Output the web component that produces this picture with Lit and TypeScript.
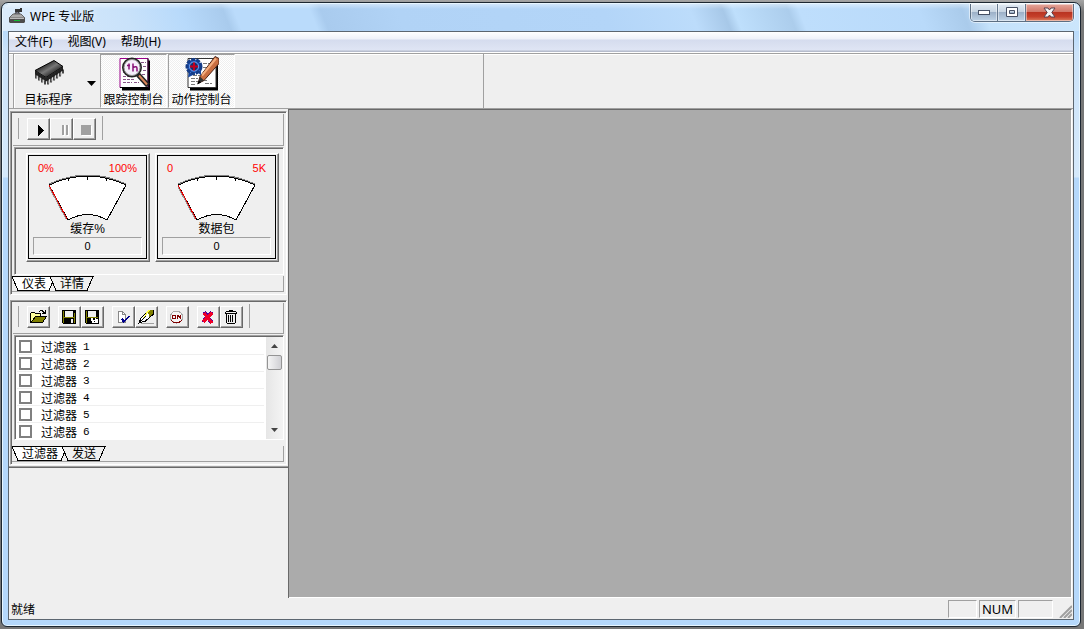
import { LitElement, html, svg, css } from "lit";
import { customElement, property, state } from "lit/decorators.js";

const icons: Record<string, unknown> = {
  play: svg`<path d="M10 6h1v1h1v1h1v1h1v1h1v1h1v1h-1v1h-1v1h-1v1h-1v1h-1v1h-1z" fill="#000"/>`,
  pause: svg`<path d="M12 6h2v11h-2zM16 6h2v11h-2z" fill="#fff"/><path d="M11 6h2v10h-2zM15 6h2v10h-2z" fill="#a0a0a0"/>`,
  stop: svg`<path d="M8 7h10v10h-10z" fill="#fff"/><path d="M7 6h10v10H7z" fill="#a0a0a0"/>`,
  open: svg`<path d="M3 6h4v1h6v3h-6l-3 5h-1z" fill="#ffff9c"/><path d="M2.500 15V6.500l1-1h3l1 1h5v3" fill="none" stroke="#000"/><path d="M11 4h1v-1h3v1h1v1h1V3h1v4h-4V6h1V5h-1V4h-2v1h-1z" fill="#000"/><path d="M7.500 9.500h11l-4 6H3z" fill="#808000" stroke="#000"/>`,
  save: svg`<path d="M3 3h14v14H4l-1-1z" fill="#000"/><path d="M4 4h1v12h-1zM4 10h12v1h-12zM15 6h1v10h-1z" fill="#808000"/><path d="M6 4h8v6H6zM12 12h2v4h-2z" fill="#efefef"/>`,
  saveas: svg`<path d="M3 3h14v14H4l-1-1z" fill="#000"/><path d="M4 4h1v12h-1zM4 10h12v1h-12z" fill="#808000"/><path d="M6 4h8v6H6z" fill="#efefef"/><path d="M9 11h2v2h2v-2h1v1h2v4h-6v-2h-1z" fill="#fff"/><path d="M12 14h1v1h-1z" fill="#000"/>`,
  check: svg`<path d="M5.500 4.500h4l3 3v8h-7z" fill="#fff" stroke="#888"/><path d="M9.500 4.500v3h3" fill="none" stroke="#888"/><path d="M9 11h1v1h1v1h1v-1h1v-1h1v-1h1v-1h2v1h-1v1h-1v1h-1v1h-1v1h-1v1h-1v1h-1v-1h-1v-2h-1z" fill="#00008b"/>`,
  pen: svg`<path d="M3 16l2-5 8-8h4.500v4l-8 7z" fill="#fff" stroke="#000"/><path d="M12 3h5v4l-4 3z" fill="#808000"/><path d="M12 3h2l-5 7-2 1z" fill="#ffff40"/><path d="M2 17l8-8" stroke="#000"/><path d="M5 16h13v1H5z" fill="#a0a0a0"/>`,
  on: svg`<circle cx="9.5" cy="10" r="6" fill="#f6f6f6" stroke="#aaa"/><path d="M4 13q5 6 11 0" fill="none" stroke="#800000"/><path d="M5 8h4v4H5zM6 9v2h2v-2zM10 8h1l2 2V8h1v4h-1l-2-2v2h-1z" fill="#800000" fill-rule="evenodd"/>`,
  del: svg`<path d="M6 5l8 11M14 5L5 15" stroke="#5000a0" stroke-width="4"/><path d="M6 6l8 10M14 6L5 15" stroke="#f00028" stroke-width="3"/>`,
  trash: svg`<path d="M8.500 4.500v-1h3v1M4.500 6.500v-1l1-1h9l1 1v1zM5.500 7v8l1 1.500h7l1-1.500V7M7.500 8v7M9.500 8v7M11.500 8v7" fill="none" stroke="#000"/>`,
};

@customElement("tool-button")
class ToolButton extends LitElement {
  @property() icon = "";
  @property() label = "";
  @property({ type: Boolean }) disabled = false;
  static styles = css`
    :host { display: block; }
    button { display: block; width: 23px; height: 22px; padding: 0; background: #efefef; border: 1px solid; border-color: #fff #696969 #696969 #fff; box-shadow: inset -1px -1px #a0a0a0; }
    svg { display: block; }
  `;
  render() {
    return html`<button aria-label=${this.label} title=${this.label} ?disabled=${this.disabled}>
      <svg width="21" height="20" viewBox="0 0 21 20" shape-rendering="crispEdges">${icons[this.icon]}</svg>
    </button>`;
  }
}

@customElement("meter-gauge")
class MeterGauge extends LitElement {
  @property() low = "";
  @property() high = "";
  @property() name = "";
  @property({ type: Number }) value = 0;
  static styles = css`
    :host { display: block; flex: none; width: 124px; box-sizing: border-box; border: 1px solid; border-color: #fff #696969 #696969 #fff; box-shadow: inset -1px -1px #a0a0a0; padding: 1px 2px 2px 1px; }
    .face { border: 1px solid #000; height: 99px; display: flex; flex-direction: column; padding: 0 4px 3px; }
    .scale { display: flex; justify-content: space-between; padding: 6px 5px 0; font: 11px/13px "Liberation Sans", sans-serif; color: #f00; }
    svg { display: block; align-self: center; flex: none; }
    .name { text-align: center; line-height: 16px; font-size: 12px; }
    output { display: block; border: 1px solid; border-color: #a0a0a0 #fff #fff #a0a0a0; line-height: 16px; font-size: 11px; text-align: center; }
  `;
  render() {
    return html`<div class="face">
      <div class="scale"><span>${this.low}</span><span>${this.high}</span></div>
      <svg width="79" height="46" viewBox="0 0 79 46" shape-rendering="crispEdges">
        <path d="M1 10Q40 -8 78 10L59 45Q40 34 20 45Z" fill="#fff" stroke="#000"/>
        <path d="M1 9Q40 -9 78 9" fill="none" stroke="#808080"/>
        <path d="M39.500 1v4M20 3l1 3M59 3l-1 3" stroke="#000"/>
        <path d="M1 12l17 32" stroke="#999"/><path d="M1 10l18 34" stroke="#e00000"/>
      </svg>
      <div class="name">${this.name}</div>
      <output aria-label=${this.name}>${this.value}</output>
    </div>`;
  }
}

@customElement("sheet-tabs")
class SheetTabs extends LitElement {
  @property({ attribute: false }) tabs: { label: string; width: number }[] = [];
  @state() active = 0;
  static styles = css`
    :host { display: flex; height: 16px; border-right: 1px solid #a0a0a0; border-bottom: 1px solid #a0a0a0; }
    button { position: relative; padding: 0; border: 0; background: none; font: inherit; color: #000; height: 16px; }
    button + button { margin-left: -6px; }
    svg { position: absolute; inset: 0; }
    span { position: relative; line-height: 16px; }
  `;
  render() {
    return this.tabs.map(({ label, width: w }, i) => html`
      <button role="tab" aria-selected=${this.active === i} style="width:${w}px" @click=${() => (this.active = i)}>
        <svg width=${w} height="16" shape-rendering="crispEdges">
          <path d="M0 .5H${w - 1}L${w - 7} 14.500H6Z" fill=${this.active === i ? "#fff" : "#efefef"} stroke="#000"/>
        </svg><span>${label}</span>
      </button>`);
  }
}

@customElement("app-root")
class AppRoot extends LitElement {
  static styles = css`
    :host { display: block; height: 100vh; box-sizing: border-box; background: linear-gradient(#a5a5a5, #777 12px, #777); padding: 2px 3px 2px 1px; font-family: "Noto Sans", "Noto Sans CJK SC", sans-serif; font-size: 12px; color: #000; overflow: hidden; }
    * { box-sizing: border-box; }
    button { font: inherit; color: inherit; }
    .window { height: 100%; display: flex; flex-direction: column; border: 1px solid #1d2731; border-radius: 7px 7px 6px 6px; padding: 0 6px 6px; background:
      linear-gradient(#b9dbfb 0 28px, #cce3f9 50px, #d5e9fb 174px, #b5d8fb 175px); box-shadow: inset 0 0 0 1px #e8f6ff; }
    .title { height: 27px; flex: none; margin: 1px -5px 0; padding-left: 5px; border-radius: 6px 6px 0 0; display: flex; align-items: flex-start; background: linear-gradient(#fff6, #fff0 5px),
      linear-gradient(68deg, #dcecfb 0, #c9e2fa 12%, #b8dafb 17%, #a9cbed 21%, #badbfb 22%, #badbfb 29%, #a9cbee 30%, #b1d3f6 37%, #b3d5f8 56%, #bcdcfb 64%, #a7c8e8 67%, #bedffc 68%, #accdec 73%, #bedefc 74%, #b9dafa 85%, #aacbeb 89%, #c5e2fb 91%, #cce6fc 100%); }
    .title h1 { font-size: 12px; font-weight: 400; line-height: 25px; margin: 0 auto 0 4px; text-shadow: 0 0 6px #fff; }
    .app-icon { margin-top: 4px; }
    .caption { display: flex; margin-right: 5px; border: 1px solid #5d6f83; border-top: 0; border-radius: 0 0 5px 5px; overflow: hidden; height: 18px; box-shadow: 0 0 0 1px #fff8; }
    .caption button { width: 27px; border: 0; border-right: 1px solid #65788e; padding: 0; display: grid; place-items: center; background: linear-gradient(#e1eaf3 0, #c6d4e2 45%, #9db1c8 50%, #bed3e7); box-shadow: inset 0 0 0 1px #fff7; }
    .caption .middle { width: 28px; }
    .caption .close { width: 47px; border: 0; background: linear-gradient(#e5a79c, #d17768 45%, #b93421 50%, #c5402a 75%, #dd8161); }
    .client { flex: 1; min-height: 0; border: 1px solid #5c6670; display: flex; flex-direction: column; background: #efefef; }
    nav { flex: none; height: 20px; display: flex; gap: 15px; padding-left: 6px; background: linear-gradient(#fff, #eef1f9 7px, #d5dcee 8px, #dfe5f4 18px, #b6bccc 19px); }
    nav button { border: 0; background: none; padding: 0; line-height: 20px; height: 20px; }
    .toolbar { flex: none; height: 57px; border-top: 1px solid #fff; border-bottom: 1px solid #a0a0a0; box-shadow: inset 0 1px #a0a0a0, inset 0 2px #fff; display: flex; padding: 1px 0 0 4px; }
    .band { width: 471px; display: flex; border-left: 1px solid #a0a0a0; border-right: 1px solid #a0a0a0; gap: 1px; box-shadow: inset 1px 0 #fff; }
    .big { width: 67px; padding: 0; border: 1px solid #fff; border-left-color: #a0a0a0; border-top-color: #a0a0a0; background: repeating-conic-gradient(#fff 0 25%, #efefef 0 50%) 0 0 / 2px 2px; display: flex; flex-direction: column; align-items: center; line-height: 17px; white-space: nowrap; }
    .big svg { height: 36px; flex: none; }
    .target { display: flex; width: 85px; }
    .target .big { width: 69px; border-color: transparent; background: none; }
    .target .arrow { border: 0; background: none; width: 16px; padding: 0; }
    main { flex: 1; min-height: 0; display: flex; }
    aside { flex: none; width: 280px; border-right: 1px solid #696969; display: flex; flex-direction: column; }
    .mdi { flex: 1; background: #ababab; border: 1px solid #696969; border-left: 0; border-right-color: #fff; border-bottom-color: #fff; box-shadow: 1px 0 #efefef; margin-right: 1px; }
    .dock { flex: none; margin: 2px 1px; border: 1px solid; border-color: #a0a0a0 #fff #fff #a0a0a0; box-shadow: inset 1px 1px #696969; padding: 2px 2px 2px 1px; font-family: "Liberation Sans", "Noto Sans CJK SC", sans-serif; }
    .tools { display: flex; border-right: 1px solid #a0a0a0; border-bottom: 1px solid #a0a0a0; height: 32px; padding: 4px 0 0 5px; margin-left: 1px; }
    .filters .tools { height: 31px; padding-top: 3px; }
    .tools i { width: 1px; height: 21px; background: #a0a0a0; margin-right: 8px; }
    .tools .end { height: 24px; margin: -2px 0 0 6px; }
    .tools .gap { margin-left: 8px; }
    .well { border: 1px solid; border-color: #a0a0a0 #fff #fff #a0a0a0; box-shadow: inset 1px 1px #696969; margin: 1px 0 1px 2px; }
    .meters { display: flex; align-items: flex-start; gap: 5px; padding: 5px 0 0 11px; height: 128px; }
    .list { height: 105px; display: flex; background: #fff; padding: 1px 0 0 1px; }
    .rows { flex: 1; overflow: hidden; margin: 0; padding: 1px 2px 0 1px; list-style: none; }
    .rows li { height: 17px; border-bottom: 1px solid #efefef; }
    .rows label { display: flex; align-items: center; height: 17px; gap: 6px; }
    .rows input { appearance: none; width: 13px; height: 13px; margin: 0 3px 0 2px; border: 2px solid #808080; background: #fff; }
    .rows input:checked { background: #404040; }
    .rows b { font-weight: 400; }
    .rows span { font: 11px "Liberation Mono", monospace; }
    .scroll { width: 17px; background: linear-gradient(90deg, #e6e6e6, #f4f4f4); display: flex; flex-direction: column; align-items: center; }
    .scroll button { border: 0; background: none; padding: 0; width: 16px; height: 18px; display: grid; place-items: center; }
    .scroll .thumb { width: 15px; height: 15px; border: 1px solid #949494; border-radius: 2px; background: linear-gradient(90deg, #f5f5f5, #d0d0d4); margin-bottom: auto; }
    .filters { margin: 3px 1px 1px; }
    .filters sheet-tabs { margin-top: 6px; }
    .split { border-top: 1px solid #a0a0a0; box-shadow: inset 0 1px #696969; flex: 1; }
    footer { flex: none; height: 21px; display: flex; gap: 2px; padding: 2px 1px 1px 2px; }
    footer p { margin: 0 auto 0 0; line-height: 20px; }
    .pane { width: 29px; border: 1px solid; border-color: #a0a0a0 #fff #fff #a0a0a0; }
    .num { width: 37px; font-size: 13px; line-height: 17px; text-align: center; }
    .last { width: 35px; }
    .grip { align-self: flex-end; margin-left: 4px; }
  `;
  render() {
    return html`<div class="window">
      <header class="title">
        <svg class="app-icon" width="18" height="16" viewBox="0 0 18 16"><path d="M5 8l5-6 2 6z" fill="#778" stroke="#222"/><path d="M7 1h5V0h2v4H7z" fill="#333"/><path d="M1 10l4-4h8l4 4z" fill="#aaa" stroke="#666"/><path d="M1 10h16v4l-1 1H2l-1-1z" fill="#4c4c4c"/><path d="M2 10h14v1H2z" fill="#bbb"/><path d="M6 12h6v1H6z" fill="#1b3"/></svg>
        <h1>WPE 专业版</h1>
        <div class="caption">
          <button aria-label="最小化"><svg width="13" height="6"><rect x=".5" y=".5" width="11" height="4" fill="#fff" stroke="#465064"/></svg></button>
          <button class="middle" aria-label="最大化"><svg width="12" height="11"><path d="M.5.5h11v9H.5zM3.500 3.500h5v3h-5z" fill="#fff" fill-rule="evenodd" stroke="#465064"/></svg></button>
          <button class="close" aria-label="关闭"><svg width="13" height="12" viewBox="0 0 13 12"><path d="M1 1h4l1.500 2L8 1h4L8.800 5.500 12 10H8L6.500 8 5 10H1l3.200-4.500z" fill="#f4f4f4" stroke="#5b4350"/></svg></button>
        </div>
      </header>
      <div class="client">
        <nav><button>文件(F)</button><button>视图(V)</button><button>帮助(H)</button></nav>
        <div class="toolbar"><div class="band">
          <div class="target">
            <button class="big"><svg width="34" viewBox="0 0 34 35">
              <defs><linearGradient id="chip" x2="1" y2="1"><stop offset=".2" stop-color="#111"/><stop offset=".5" stop-color="#777"/><stop offset=".8" stop-color="#111"/></linearGradient></defs>
              <path d="M3 15L22 5l9 6-17 11z" fill="url(#chip)" stroke="#000"/><path d="M3 15v4l11 7 17-11v-4L14 22z" fill="#222"/>
              <path d="M4 19v4M7 21v4M10 23v4M13 25v4M16 24v5M19 22v5M22 20v5M25 18v5M28 16v5M31 14v4" stroke="#111" stroke-width="1.500"/><path d="M5 20v3M8 22v3M11 24v3M17 25v3M20 23v3M23 21v3M26 19v3M29 17v3" stroke="#bbb"/></svg>目标程序</button>
            <button class="arrow" aria-label="选择目标程序"><svg width="9" height="5"><path d="M0 0h9L4.500 5z"/></svg></button>
          </div>
          <button class="big"><svg width="34" viewBox="0 0 34 35">
            <path d="M5 5h28v30H5z"/><path d="M3 3h28v29H3z" fill="#fff" stroke="#908"/><path d="M31 3v29H3" fill="none" stroke="#000"/>
            <path d="M6 9h4M6 13h3M6 17h4M6 21h9M6 24h12M6 27h9M24 7h5M26 11h3M26 15h3M25 19h4M17 27h5" stroke="#858" stroke-dasharray="3 1"/>
            <path d="M21 19l10 11" stroke="#222" stroke-width="5"/><path d="M22 20l8 9" stroke="#d9865a" stroke-width="2"/>
            <circle cx="15" cy="12" r="9" fill="#f5effb" stroke="#222" stroke-width="2"/><circle cx="15" cy="12" r="8" fill="none" stroke="#999"/><path d="M10 10h3M12 8v6M16 8v8M16 12q4-2 4 1v3" fill="none" stroke="#817" stroke-width="1.500"/></svg>跟踪控制台</button>
          <button class="big"><svg width="34" viewBox="0 0 34 35">
            <path d="M5 5h28v30H5z"/><path d="M3 3h28v29H3z" fill="#fff" stroke="#333"/>
            <path d="M6 23h7M6 26h9M6 29h5M18 8h8M18 12h6M18 16h5M8 20h8M20 28h8M18 25h5" stroke="#777" stroke-dasharray="4 1 2 1"/>
            <path d="M4 16l-1 6 6-3zM12 16l4 4 0-6z" fill="#1646a0"/><circle cx="9" cy="11" r="7" fill="#2058c0" stroke="#143c88" stroke-width="3" stroke-dasharray="4 1"/><circle cx="9" cy="11" r="4.500" fill="#123070" stroke="#79a8f0"/><path d="M9 7v8M5 11h8" stroke="#c00020" stroke-width="2"/>
            <path d="M30 1l4 2v5L19 25l-6 3 2-7z" fill="#c96f42" stroke="#4b2418"/><path d="M31 3L17 20" stroke="#f3ad7e" stroke-width="2"/><path d="M15 21l4 4-6 3z" fill="#333"/><path d="M12 29l2-4 2 2z"/></svg>动作控制台</button>
        </div></div>
        <main>
          <aside>
            <section class="dock">
              <div class="tools"><i></i>
                <tool-button icon="play" label="开始"></tool-button><tool-button icon="pause" label="暂停" disabled></tool-button><tool-button icon="stop" label="停止" disabled></tool-button><i class="end"></i></div>
              <div class="well meters">
                <meter-gauge low="0%" high="100%" name="缓存%"></meter-gauge>
                <meter-gauge low="0" high="5K" name="数据包"></meter-gauge>
              </div>
              <sheet-tabs .tabs=${[{ label: "仪表", width: 44 }, { label: "详情", width: 44 }]}></sheet-tabs>
            </section>
            <section class="dock filters">
              <div class="tools"><i></i>
                <tool-button icon="open" label="打开"></tool-button>
                <tool-button class="gap" icon="save" label="保存"></tool-button><tool-button icon="saveas" label="另存为"></tool-button>
                <tool-button class="gap" icon="check" label="应用"></tool-button><tool-button icon="pen" label="编辑"></tool-button>
                <tool-button class="gap" icon="on" label="启用"></tool-button>
                <tool-button class="gap" icon="del" label="删除"></tool-button><tool-button icon="trash" label="清空"></tool-button><i class="end"></i></div>
              <div class="well list">
                <ul class="rows">${[1, 2, 3, 4, 5, 6].map((n) => html`<li><label><input type="checkbox" /><b>过滤器</b><span>${n}</span></label></li>`)}</ul>
                <div class="scroll">
                  <button aria-label="向上滚动"><svg width="7" height="4"><path d="M0 4l3.500-4L7 4z" fill="#444"/></svg></button>
                  <div class="thumb"></div>
                  <button aria-label="向下滚动"><svg width="7" height="4"><path d="M0 0h7L3.500 4z" fill="#444"/></svg></button>
                </div>
              </div>
              <sheet-tabs .tabs=${[{ label: "过滤器", width: 56 }, { label: "发送", width: 44 }]}></sheet-tabs>
            </section>
            <div class="split"></div>
          </aside>
          <div class="mdi"></div>
        </main>
        <footer><p>就绪</p><div class="pane"></div><div class="pane num">NUM</div><div class="pane last"></div>
          <svg class="grip" width="13" height="13"><path d="M1 13L13 1M5 13l8-8M9 13l4-4" stroke="#a0a0a0" stroke-width="2"/></svg></footer>
      </div>
    </div>`;
  }
}
